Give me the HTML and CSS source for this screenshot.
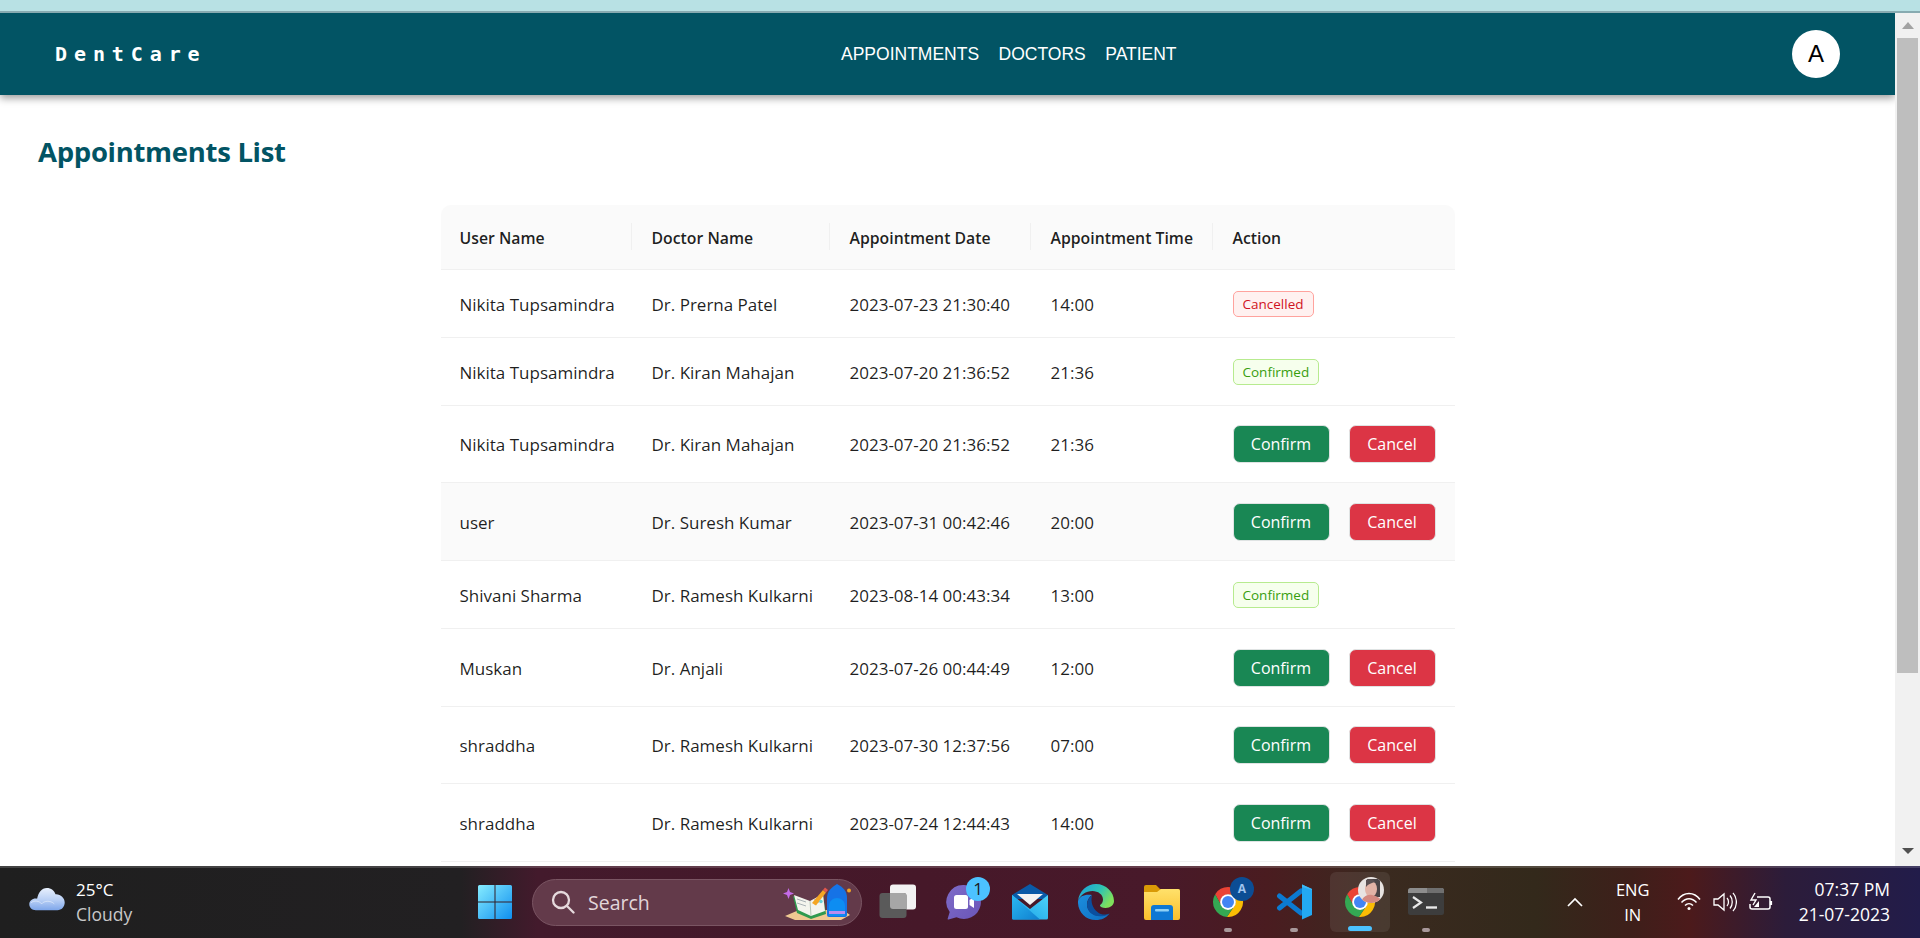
FILE: index.html
```html
<!DOCTYPE html>
<html lang="en">
<head>
<meta charset="utf-8">
<title>DentCare</title>
<link rel="stylesheet" href="styles.css">
</head>
<body>
<div class="screen">
  <div class="topstrip"></div>
  <div class="viewport">
    <div class="page">
      <nav class="nav">
        <div class="logo">DentCare</div>
        <div class="links"><a>APPOINTMENTS</a><a>DOCTORS</a><a>PATIENT</a></div>
        <div class="avatar">A</div>
      </nav>
      <main class="content">
        <h1 class="title">Appointments List</h1>
        <table class="table">
          <colgroup><col class="c1"><col class="c2"><col class="c3"><col class="c4"><col class="c5"></colgroup>
          <thead>
            <tr><th>User Name</th><th>Doctor Name</th><th>Appointment Date</th><th>Appointment Time</th><th>Action</th></tr>
          </thead>
          <tbody>
            <tr class="r68"><td>Nikita Tupsamindra</td><td>Dr. Prerna Patel</td><td>2023-07-23 21:30:40</td><td>14:00</td><td><span class="tag tag-red">Cancelled</span></td></tr>
            <tr class="r68"><td>Nikita Tupsamindra</td><td>Dr. Kiran Mahajan</td><td>2023-07-20 21:36:52</td><td>21:36</td><td><span class="tag tag-green">Confirmed</span></td></tr>
            <tr class="r77"><td>Nikita Tupsamindra</td><td>Dr. Kiran Mahajan</td><td>2023-07-20 21:36:52</td><td>21:36</td><td><div class="actions"><button class="btn btn-ok">Confirm</button><button class="btn btn-no">Cancel</button></div></td></tr>
            <tr class="r78 hover"><td>user</td><td>Dr. Suresh Kumar</td><td>2023-07-31 00:42:46</td><td>20:00</td><td><div class="actions"><button class="btn btn-ok">Confirm</button><button class="btn btn-no">Cancel</button></div></td></tr>
            <tr class="r68"><td>Shivani Sharma</td><td>Dr. Ramesh Kulkarni</td><td>2023-08-14 00:43:34</td><td>13:00</td><td><span class="tag tag-green">Confirmed</span></td></tr>
            <tr class="r78"><td>Muskan</td><td>Dr. Anjali</td><td>2023-07-26 00:44:49</td><td>12:00</td><td><div class="actions"><button class="btn btn-ok">Confirm</button><button class="btn btn-no">Cancel</button></div></td></tr>
            <tr class="r77"><td>shraddha</td><td>Dr. Ramesh Kulkarni</td><td>2023-07-30 12:37:56</td><td>07:00</td><td><div class="actions"><button class="btn btn-ok">Confirm</button><button class="btn btn-no">Cancel</button></div></td></tr>
            <tr class="r78"><td>shraddha</td><td>Dr. Ramesh Kulkarni</td><td>2023-07-24 12:44:43</td><td>14:00</td><td><div class="actions"><button class="btn btn-ok">Confirm</button><button class="btn btn-no">Cancel</button></div></td></tr>
          </tbody>
        </table>
      </main>
    </div>
    <div class="scrollbar">
      <svg class="arrow" width="14" height="8" viewBox="0 0 14 8"><path d="M7 0l6 7H1z" fill="#a3a3a3"/></svg>
      <div class="thumb"></div>
      <svg class="arrow arrow-down" width="14" height="8" viewBox="0 0 14 8"><path d="M7 7L1 1h12z" fill="#505050"/></svg>
    </div>
  </div>

  <footer class="taskbar">
    <div class="weather">
      <svg class="cloud" width="36" height="24" viewBox="0 0 37 24">
        <defs><linearGradient id="cl" x1="0" y1="0" x2="0" y2="1"><stop offset="0" stop-color="#e8f0fd"/><stop offset=".55" stop-color="#b8cff5"/><stop offset="1" stop-color="#7ea6ea"/></linearGradient></defs>
        <path d="M7 23.500C3 23.500.3 21 .3 17.500c0-3.500 3-6 6.500-6 .6 0 1 0 1.500.2C9.800 5 13 .6 18.300.6c4.500 0 7.800 2.700 8.900 6.500 5-.4 9.500 3.500 9.500 8.500 0 4.500-3.200 7.900-7.500 7.900z" fill="url(#cl)"/>
        <path d="M2 16c3-3 9-2 11 1 2-3 9-4 13 0" fill="none" stroke="#fff" stroke-opacity=".45"/>
      </svg>
      <div class="weather-text"><span class="temp">25°C</span><span class="cond">Cloudy</span></div>
    </div>

    <div class="slot">
      <svg width="36" height="36" viewBox="0 0 36 36">
        <defs><linearGradient id="win" x1="0" y1="0" x2="1" y2="1"><stop offset="0" stop-color="#86ecff"/><stop offset="1" stop-color="#0f8fef"/></linearGradient></defs>
        <path d="M1 2.500A1.500 1.500 0 0 1 2.500 1H17.500V17.500H1zM18.500 1H33.500A1.500 1.500 0 0 1 35 2.500V17.500H18.500zM1 18.500H17.500V35H2.500A1.500 1.500 0 0 1 1 33.500zM18.500 18.500H35V33.500A1.500 1.500 0 0 1 33.500 35H18.500z" fill="url(#win)"/>
      </svg>
    </div>

    <div class="search">
      <svg width="24" height="24" viewBox="0 0 24 24" fill="none" stroke="#e6dadd" stroke-width="2.300"><circle cx="10" cy="10" r="8"/><path d="M16 16l6.500 6.500" stroke-linecap="round"/></svg>
      <span class="search-label">Search</span>
      <svg class="search-art" width="70" height="38" viewBox="0 0 70 38">
        <path d="M2 33L16 27H60L67 32L58 37H12z" fill="#efc992"/>
        <path d="M4 9l1.500-4 1.500 4 4 1.500-4 1.500-1.500 4-1.500-4-4-1.500z" fill="#c56be8"/>
        <path d="M10 13l17 6 13-7 3 19-15 5-14-6z" fill="#2f9a4f"/>
        <path d="M11 12l16 6 13-7 2 17-14 5-13-6z" fill="#f4f4ee"/>
        <path d="M27 18l1 15" stroke="#b6c6b6" fill="none"/>
        <path d="M14 16l9 3M14 20l9 3M31 17l7-3M31 21l7-3" stroke="#aab2b6" stroke-width="1" fill="none"/>
        <path d="M29 20L40 7l3 2.500-10 13z" fill="#f5a623"/><path d="M40 7l2-2.500 3 2.500-2 2.500z" fill="#e2574c"/>
        <circle cx="38" cy="18.500" r="1.700" fill="#67d2d8"/>
        <path d="M44 32V15C44 8 49 4 54 1c6 3 10 7 10 14v17q0 2-2 2H46q-2 0-2-2z" fill="#1673e6"/>
        <path d="M46 23c0-5 4-8 8-8s8 3 8 8v10H46z" fill="#0d8df2"/>
        <path d="M46 28h16v3H46z" fill="#b88cf0"/>
        <circle cx="66" cy="7.500" r="2" fill="#f5a623"/>
      </svg>
    </div>

    <div class="slot">
      <svg width="38" height="36" viewBox="0 0 38 36">
        <rect x="11" y="0.500" width="26" height="25" rx="3" fill="#f2f2f2"/>
        <rect x="0.500" y="9" width="27" height="25" rx="3" fill="#5a5a5a"/>
        <path d="M11 9h14q2.500 0 2.500 2.500V25H14q-3 0-3-3z" fill="#a6a6a6"/>
      </svg>
    </div>

    <div class="slot">
      <div class="icon-wrap">
        <svg width="36" height="36" viewBox="0 0 36 36">
          <defs><linearGradient id="meet" x1="0" y1="0" x2="1" y2="1"><stop offset="0" stop-color="#7e6cc8"/><stop offset="1" stop-color="#6a55b8"/></linearGradient></defs>
          <path d="M18 1a17 17 0 1 1-7.500 32.300L2.500 35.500q-1 .2-.8-.9l2-6.500A17 17 0 0 1 18 1z" fill="url(#meet)"/>
          <rect x="8" y="11" width="14" height="14" rx="2.500" fill="#fff"/>
          <path d="M23.500 16l4.500-3v11l-4.500-3z" fill="#fff"/>
        </svg>
        <span class="count">1</span>
      </div>
    </div>

    <div class="slot">
      <svg width="36" height="36" viewBox="0 0 36 36">
        <defs><linearGradient id="m1" x1="0" y1="0" x2="1" y2="1"><stop offset="0" stop-color="#2bb8f2"/><stop offset="1" stop-color="#0f7fcf"/></linearGradient><linearGradient id="m2" x1="1" y1="0" x2="0" y2="1"><stop offset="0" stop-color="#4dd2f8"/><stop offset="1" stop-color="#1aa1e6"/></linearGradient></defs>
        <path d="M0 11L18 0l18 11v4H0z" fill="#0a5aa8"/>
        <path d="M5 10h26l-13 11z" fill="#f4f4f4"/>
        <path d="M0 11l18 14 18-14v23q0 1.500-1.500 1.500h-33Q0 35.500 0 34z" fill="url(#m2)"/>
        <path d="M0 11l28 24.500H1.500Q0 35.500 0 34z" fill="url(#m1)"/>
      </svg>
    </div>

    <div class="slot">
      <svg width="36" height="36" viewBox="0 0 36 36">
        <defs>
          <linearGradient id="e1" x1="0" y1="0" x2="1" y2=".5"><stop offset="0" stop-color="#1a9fe0"/><stop offset=".6" stop-color="#2fc4b2"/><stop offset="1" stop-color="#7fe05c"/></linearGradient>
          <linearGradient id="e2" x1="0" y1="0" x2="1" y2="1"><stop offset="0" stop-color="#1c8ede"/><stop offset="1" stop-color="#0f6fc0"/></linearGradient>
        </defs>
        <path d="M0 17C1 7 9 0 18 0c10 0 18 8 18 17 0 4-3.500 7-8.500 7-3 0-5.500-1-5.500-2.500 0-1 3-2 3-6 0-5-5-8.500-10.500-8.500C8 7 2 11 0 17z" fill="url(#e1)"/>
        <path d="M0 17c-.5 10 7 19 18 19 5.500 0 10-2 13.500-6.500-3 1.500-6 2.300-9.500 2.300-7.500 0-13-5.300-13-11.300 0-4 2-7.500 5-9.500C7 10 1.500 12 0 17z" fill="url(#e2)"/>
        <path d="M14 11.500c-3 2-5 5.500-5 9.500 0 6 5.500 11.300 13 11.300 3.500 0 6.500-.8 9.500-2.300-4 1-9 1-12-2-5-4-7-10-5.500-16.500z" fill="#0b4f9e"/>
      </svg>
    </div>

    <div class="slot">
      <svg width="36" height="36" viewBox="0 0 36 36">
        <defs><linearGradient id="f1" x1="0" y1="0" x2="0" y2="1"><stop offset="0" stop-color="#ffe16b"/><stop offset="1" stop-color="#fbbf2c"/></linearGradient></defs>
        <path d="M0 3q0-2 2-2h10l4 4h18q2 0 2 2v6H0z" fill="#d99a06"/>
        <path d="M0 8h13l4-3h17q2 0 2 2v27q0 2-2 2H2q-2 0-2-2z" fill="url(#f1)"/>
        <path d="M7 36V24q0-3 3-3h16q3 0 3 3v12z" fill="#0f78d4"/>
        <rect x="11" y="25" width="14" height="2.500" rx="1" fill="#8fd0f5"/>
      </svg>
    </div>

    <div class="slot">
      <div class="icon-wrap">
        <svg width="36" height="36" viewBox="0 0 48 48">
          <path d="M41.320 14A20 20 0 0 0 6.900 13.600L15.340 29A10 10 0 0 1 24 14z" fill="#ea4335"/>
          <path d="M41.320 14H24A10 10 0 0 1 32.660 29L22.500 43.940A20 20 0 0 0 41.320 14z" fill="#fbbc04"/>
          <path d="M6.900 13.600A20 20 0 0 0 22.500 43.940L32.660 29A10 10 0 0 1 15.340 29z" fill="#34a853"/>
          <circle cx="24" cy="24" r="10.500" fill="#fff"/><circle cx="24" cy="24" r="8" fill="#4285f4"/>
        </svg>
        <span class="profile">A</span>
        <i class="dot"></i>
      </div>
    </div>

    <div class="slot">
      <div class="icon-wrap">
        <svg width="36" height="36" viewBox="0 0 36 36" fill="none">
          <path d="M3.500 12L25 29M3.500 24L25 7" stroke="#0b7ad1" stroke-width="5" stroke-linecap="round"/>
          <path d="M26 .5L36 5v26l-10 4.500z" fill="#23a9f2"/>
          <path d="M26 .5L36 5v1L26 3z" fill="#3db8f5"/>
        </svg>
        <i class="dot"></i>
      </div>
    </div>

    <div class="slot slot-active">
      <div class="icon-wrap">
        <svg width="36" height="36" viewBox="0 0 48 48">
          <path d="M41.320 14A20 20 0 0 0 6.900 13.600L15.340 29A10 10 0 0 1 24 14z" fill="#ea4335"/>
          <path d="M41.320 14H24A10 10 0 0 1 32.660 29L22.500 43.940A20 20 0 0 0 41.320 14z" fill="#fbbc04"/>
          <path d="M6.900 13.600A20 20 0 0 0 22.500 43.940L32.660 29A10 10 0 0 1 15.340 29z" fill="#34a853"/>
          <circle cx="24" cy="24" r="10.500" fill="#fff"/><circle cx="24" cy="24" r="8" fill="#4285f4"/>
        </svg>
        <svg class="portrait" width="26" height="26" viewBox="0 0 26 26">
          <defs><clipPath id="pc"><circle cx="13" cy="13" r="13"/></clipPath></defs>
          <g clip-path="url(#pc)">
            <rect width="26" height="26" fill="#e8e4e2"/>
            <path d="M9 2h13v18h-6z" fill="#4a4446"/>
            <ellipse cx="13" cy="12" rx="6" ry="8" fill="#e2b3a6"/>
            <path d="M3 26c1-6 6-9 11-8s9 3 10 8z" fill="#d48a80"/>
            <path d="M8 3c4-2 8-1 9 2-3 1-7 2-9 5z" fill="#5a5052"/>
          </g>
        </svg>
      </div>
      <i class="indicator"></i>
    </div>

    <div class="slot">
      <div class="icon-wrap">
        <svg width="36" height="28" viewBox="0 0 36 28">
          <rect width="36" height="27" y="0" rx="2.500" fill="#3d3d3d"/>
          <path d="M0 2.500Q0 0 2.500 0H33.500Q36 0 36 2.500V5H0z" fill="#8d8d8d"/>
          <path d="M19 0h14.500Q36 0 36 2.500V5H19z" fill="#6f6f6f"/>
          <path d="M5 9l8 5.500-8 5.500" fill="none" stroke="#e8e8e8" stroke-width="2.200"/>
          <path d="M18 19.500h11" stroke="#e8e8e8" stroke-width="2.400"/>
        </svg>
        <i class="dot"></i>
      </div>
    </div>

    <div class="tray">
      <svg class="chevron" width="16" height="10" viewBox="0 0 16 10" fill="none" stroke="#fff" stroke-width="1.700"><path d="M1 9l7-7 7 7"/></svg>
      <div class="lang"><span>ENG</span><span>IN</span></div>
      <div class="sys">
        <svg width="24" height="20" viewBox="0 0 24 20" fill="none" stroke="#fff" stroke-width="1.500"><path d="M1 7.500C7-.5 17-.5 23 7.500M4.500 10.500c4.500-5 10.500-5 15 0M8 13.500c2.500-2.500 5.500-2.500 8 0"/><circle cx="12" cy="16.500" r="1.500" fill="#fff" stroke="none"/></svg>
        <svg width="24" height="20" viewBox="0 0 24 20" fill="none" stroke="#fff" stroke-width="1.300"><path d="M1 7h4l6-5v16l-6-5H1z"/><path d="M14 6c2 2 2 6 0 8M17 3.500c3 3.500 3 9.500 0 13M20 1c4.500 5 4.500 13 0 18"/></svg>
        <svg width="24" height="20" viewBox="0 0 24 20" fill="none" stroke="#fff" stroke-width="1.500"><path d="M8 5h11q2 0 2 2v8q0 2-2 2H3q-2 0-2-2v-3"/><path d="M22 9v4" stroke-width="2.200"/><path d="M6 1L2 8h5l-3 5" stroke-width="1.400"/><path d="M5 15l5-6v6z" fill="#fff" stroke="none"/></svg>
      </div>
      <div class="clock"><span>07:37 PM</span><span>21-07-2023</span></div>
    </div>
  </footer>
</div>
</body>
</html>
```
FILE: styles.css
```css
* { box-sizing: border-box; }
html, body { margin: 0; padding: 0; height: 100%; overflow: hidden; }
body { font-family: "Open Sans", "Noto Sans", sans-serif; color: rgba(0,0,0,.88); background: #fff; }

.screen { display: flex; flex-direction: column; height: 938px; overflow: hidden; }
.topstrip { height: 13px; flex: none; background: #b8e1e4; border-bottom: 2px solid #88abb1; }
.viewport { flex: 1; min-height: 0; display: flex; }
.page { flex: 1; min-width: 0; overflow: hidden; background: #fff; }

/* nav */
.nav { height: 82px; background: #025464; display: flex; align-items: center; padding: 0 55px; box-shadow: 0 3px 8px rgba(0,0,0,.4); position: relative; }
.logo { width: 786px; font-family: "DejaVu Sans Mono", monospace; font-weight: 700; font-size: 20px; letter-spacing: 6.900px; color: #fff; }
.links { display: flex; gap: 19.500px; font-family: "Liberation Sans", Arial, sans-serif; font-size: 17.500px; color: #fff; }
.avatar { margin-left: auto; width: 48px; height: 48px; border-radius: 50%; background: #fff; color: #000; display: flex; align-items: center; justify-content: center; font-family: "Liberation Sans", Arial, sans-serif; font-size: 24px; }

/* content */
.content { padding-top: 37px; }
.title { margin: 0 0 0 38px; font-size: 27.500px; font-weight: 700; line-height: 40px; color: #025464; letter-spacing: -.3px; }
.table { margin: 33px auto 0; width: 1014px; table-layout: fixed; border-collapse: separate; border-spacing: 0; font-size: 17px; }
.c1 { width: 192px; } .c2 { width: 198px; } .c3 { width: 201px; } .c4 { width: 182px; } .c5 { width: 241px; }
th { position: relative; height: 65px; padding: 2px 0 0 19px; text-align: left; font-size: 15.800px; font-weight: 600; background: #fafafa; border-bottom: 1px solid #f0f0f0; }
th:first-child { border-top-left-radius: 10px; }
th:last-child { border-top-right-radius: 10px; }
th:not(:last-child)::before { content: ""; position: absolute; right: 1px; top: 50%; width: 1px; height: 27px; margin-top: -14px; background: #f0f0f0; }
td { padding: 1px 0 0 19px; border-bottom: 1px solid #f0f0f0; white-space: nowrap; }
.r68 { height: 68px; } .r77 { height: 77px; } .r78 { height: 78px; }
.hover td { background: #fafafa; }

.tag { display: inline-block; height: 26px; line-height: 24px; padding: 0 9px; font-size: 13.500px; border-radius: 5px; border: 1px solid; }
.tag-red { color: #cf1322; background: #fff1f0; border-color: #ffa39e; }
.tag-green { color: #389e0d; background: #f6ffed; border-color: #b7eb8f; }
.actions { display: flex; gap: 19px; margin-top: -1px; }
.btn { height: 38px; border: 1px solid #dfe3e3; border-radius: 7px; color: #fff; font: inherit; font-size: 16px; padding: 0; }
.btn-ok { width: 97px; background: #198754; }
.btn-no { width: 87px; background: #dc3545; }

/* scrollbar */
.scrollbar { width: 25px; flex: none; background: #f1f1f1; position: relative; display: flex; flex-direction: column; align-items: center; padding: 9px 0 11px; }
.arrow { flex: none; }
.thumb { width: 21px; height: 635px; margin-top: 8px; background: #bebebe; }
.arrow-down { margin-top: auto; }

/* taskbar */
.taskbar { height: 72px; flex: none; display: flex; align-items: center; color: #fff; border-top: 2px solid rgba(255,255,255,.16); padding-bottom: 2px;
  background: linear-gradient(90deg, #1f1f1f 0, #222022 24%, #431a2c 28%, #461829 48%, #48192a 60%, #4a1c20 66%, #3a2a1f 72%, #33291b 80%, #3e1f1a 85%, #4c1a1b 88%, #2c1c3a 93%, #221c4a 100%); }
.weather { width: 462px; flex: none; display: flex; align-items: center; gap: 11px; padding-left: 29px; }
.cloud { margin-bottom: 6px; }
.weather-text { display: flex; flex-direction: column; line-height: 24px; font-size: 17px; margin-top: -1px; }
.cond { color: #c8c8c8; font-size: 17.500px; }
.temp, .cond { display: block; }

.slot { width: 66px; height: 60px; flex: none; display: flex; align-items: center; justify-content: center; position: relative; border-radius: 6px; }
.slot-active { background: rgba(255,255,255,.08); margin: 0 3px; width: 60px; }
.icon-wrap { position: relative; width: 36px; height: 36px; display: flex; align-items: center; justify-content: center; }
.count { position: absolute; right: -8px; top: -7px; width: 24px; height: 24px; border-radius: 50%; background: #4cc2ff; color: #1b1b1b; font-size: 17px; text-align: center; line-height: 24px; }
.profile { position: absolute; right: -8px; top: -7px; width: 24px; height: 24px; border-radius: 50%; background: #0c4d94; color: #9fc3ee; font-size: 12px; font-weight: 700; text-align: center; line-height: 24px; }
.portrait { position: absolute; right: -6px; top: -7px; }
.dot { position: absolute; left: 14px; top: 44px; width: 8px; height: 4px; border-radius: 2px; background: #a8989a; }
.indicator { position: absolute; left: 18px; bottom: 1px; width: 24px; height: 5px; border-radius: 3px; background: #4cc2ff; }

.search { width: 330px; height: 47px; flex: none; margin: 0 3px 0 4px; display: flex; align-items: center; position: relative; padding-left: 18px; border-radius: 24px; background: #633a4a; border: 1px solid #7a5563; }
.search-label { margin-left: 13px; font-size: 19.500px; color: #e2d6da; }
.search-art { margin-left: auto; margin-right: 8px; }

.tray { margin-left: auto; display: flex; align-items: center; padding-right: 30px; }
.chevron { margin-right: 32px; }
.lang { display: flex; flex-direction: column; align-items: center; width: 36px; font-size: 16.500px; line-height: 25px; margin-right: 26px; }
.sys { display: flex; gap: 12px; margin-right: 26px; }
.clock { display: flex; flex-direction: column; align-items: flex-end; font-size: 17.500px; line-height: 25px; }
```
